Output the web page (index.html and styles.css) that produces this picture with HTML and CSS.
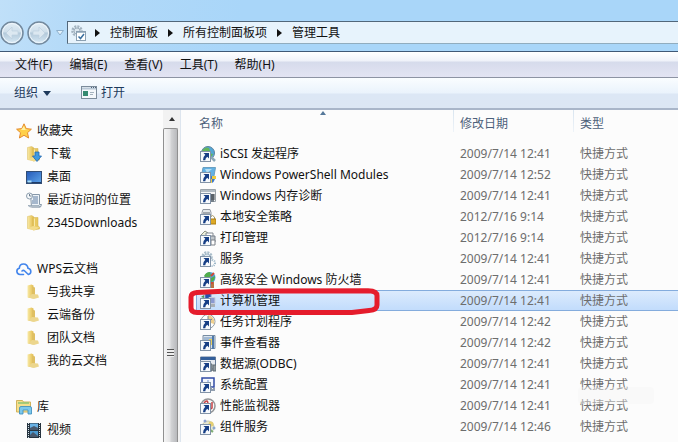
FILE: index.html
```html
<!DOCTYPE html>
<html lang="zh-CN">
<head>
    <meta charset="UTF-8">
    <meta name="viewport" content="width=device-width, initial-scale=1.0">
    <title>管理工具</title>
    <link rel="stylesheet" href="styles.css">
</head>
<body>
    <!-- 共用图标 -->
    <svg class="defs" aria-hidden="true">
        <defs>
            <linearGradient id="gold" x1="0" x2="1">
                <stop offset="0" stop-color="#f9eaa6"/>
                <stop offset="1" stop-color="#e2bc4c"/>
            </linearGradient>
            <linearGradient id="orb" x1="0" y1="0" x2="0" y2="1">
                <stop offset="0" stop-color="#e3eef6"/>
                <stop offset="0.45" stop-color="#cfdfeb"/>
                <stop offset="0.5" stop-color="#b3c9da"/>
                <stop offset="1" stop-color="#d9ebf7"/>
            </linearGradient>
            <linearGradient id="screen" x1="0" y1="0" x2="1" y2="1">
                <stop offset="0" stop-color="#2559b8"/>
                <stop offset="1" stop-color="#5ea6ea"/>
            </linearGradient>
            <symbol id="folder" viewBox="0 0 16 16">
                <path d="M1.500 1.500l4-1 2 1v13l-6-1z" fill="url(#gold)" stroke="#d9ba5c" stroke-width=".5"/>
                <path d="M7 2.500h5v8.500l1.500 1v2L7 15z" fill="#e9c95f" stroke="#cfae4c" stroke-width=".5"/>
                <path d="M8.500 3.500v8" stroke="#f8e9a8"/>
                <path d="M1.500 13.500L7 11l6.500 1.500L8 15.500z" fill="#f3dc8a"/>
            </symbol>
            <symbol id="cloud-folder" viewBox="0 0 16 16">
                <path d="M1.500 1.500l4-1 2 1v13l-6-1z" fill="url(#gold)"/>
                <path d="M6 2.500l3 1V12H6z" fill="#dfbf62"/>
                <path d="M2 13.500L6 10l6 .5 1 3-5 1.500z" fill="#ecd68d"/>
            </symbol>
            <symbol id="shortcut" viewBox="0 0 16 16">
                <rect x=".5" y="5.500" width="10" height="10" fill="#f7fafd" stroke="#8394a8"/>
                <path d="M3.500 7H9v5.500L7.300 10.800Q5.300 12 5.300 14.200H3Q2.800 11 5.300 8.800z" fill="#163e85"/>
            </symbol>
        </defs>
    </svg>

    <header class="titlebar">
        <div class="history">
            <button class="orb" type="button" aria-label="后退">
                <svg viewBox="0 0 24 24"><circle cx="12" cy="12" r="11" fill="url(#orb)" stroke="#73899d" stroke-width="1.500"/><circle cx="12" cy="12" r="9.500" fill="none" stroke="#f0f7fc"/><path d="M12 6l-6 6 6 6v-4h6v-4h-6z" fill="#dce8f1" stroke="#bdd0df" stroke-width=".7"/></svg>
            </button>
            <button class="orb" type="button" aria-label="前进">
                <svg viewBox="0 0 24 24"><circle cx="12" cy="12" r="11" fill="url(#orb)" stroke="#73899d" stroke-width="1.500"/><circle cx="12" cy="12" r="9.500" fill="none" stroke="#f0f7fc"/><path d="M12 6l6 6-6 6v-4H6v-4h6z" fill="#dce8f1" stroke="#bdd0df" stroke-width=".7"/></svg>
            </button>
            <button class="recent" type="button" aria-label="最近页面">
                <svg viewBox="0 0 8 6"><path d="M.5.5h7L4 5z" fill="#e3f2fc" stroke="#8fb0cc"/></svg>
            </button>
        </div>
        <nav class="address" aria-label="地址">
            <svg class="icon" viewBox="0 0 16 16">
                <circle cx="6" cy="6" r="4.500" fill="none" stroke="#a3b3c0" stroke-width="2.500" stroke-dasharray="2 1"/>
                <circle cx="6" cy="6" r="3" fill="#dce7ef" stroke="#9fb0be"/>
                <rect x="5.500" y="6.500" width="9" height="9" fill="#fff" stroke="#8ba0b2"/>
                <path d="M6 7.500h8" stroke="#a9bccb"/>
                <path d="M7.500 11.500l2 2 3.500-4.500" fill="none" stroke="#3a6f9f" stroke-width="1.500"/>
            </svg>
            <span class="arrow"></span>
            <a href="#">控制面板</a>
            <span class="arrow"></span>
            <a href="#">所有控制面板项</a>
            <span class="arrow"></span>
            <a href="#">管理工具</a>
        </nav>
    </header>

    <nav class="menubar" aria-label="菜单">
        <button type="button">文件(F)</button>
        <button type="button">编辑(E)</button>
        <button type="button">查看(V)</button>
        <button type="button">工具(T)</button>
        <button type="button">帮助(H)</button>
    </nav>

    <div class="toolbar">
        <button class="organize" type="button">组织<span class="caret"></span></button>
        <button class="open" type="button">
            <svg class="icon" viewBox="0 0 16 16">
                <rect x=".5" y="1.500" width="15" height="12" fill="#f4f8fb" stroke="#7c8c9b"/>
                <path d="M1 3.500h14" stroke="#b9c8d6" stroke-width="2"/>
                <path d="M10 2.500h1m1 0h1m1 0h1" stroke="#4c6279"/>
                <rect x="2" y="6" width="5" height="5" fill="#358a70"/>
                <path d="M9 7.500h4M9 9.500h3" stroke="#a4b3be"/>
            </svg>
            打开
        </button>
    </div>

    <main class="content">
        <nav class="sidebar" aria-label="导航窗格">
            <section>
                <a class="group" href="#">
                    <svg class="icon" viewBox="0 0 16 16"><path d="M8 .8l2.200 4.800 5.200.6-3.900 3.500 1.100 5.300L8 12.300 3.400 15l1.100-5.300L.6 6.200l5.200-.6z" fill="#ffd04a" stroke="#e58b2d"/><path d="M8 3l1.300 3.500L12 7H5z" fill="#fff2a5"/></svg>
                    收藏夹
                </a>
                <a href="#">
                    <svg class="icon" viewBox="0 0 16 16"><use href="#folder"/><path d="M9 6h4v4h2.500L11 15.500 6.500 10H9z" fill="#3f9ae0" stroke="#2468ae" stroke-width=".8"/></svg>
                    下载
                </a>
                <a href="#">
                    <svg class="icon" viewBox="0 0 16 16"><rect x=".5" y="2.500" width="15" height="12" fill="url(#screen)" stroke="#314d75"/><path d="M1 13.500h14" stroke="#203c68"/><path d="M1.500 12.500h4" stroke="#a8dff8" stroke-width="2"/></svg>
                    桌面
                </a>
                <a href="#">
                    <svg class="icon" viewBox="0 0 16 16"><path d="M4.500 2.500h9v10h2l-1 2.500h-9z" fill="#edf3f8" stroke="#8798a9"/><path d="M7 5h5M7 7h5M6 9h6M6 11h6" stroke="#5e7ca1"/><circle cx="3.500" cy="4" r="3" fill="#f6f9fc" stroke="#8c9dac"/><path d="M3.500 2v2h2" fill="none" stroke="#526477" stroke-width=".8"/><path d="M2 13.500h11l1 1.500H4z" fill="#bfcbd5" stroke="#8798a9" stroke-width=".6"/></svg>
                    最近访问的位置
                </a>
                <a href="#"><svg class="icon"><use href="#folder"/></svg>2345Downloads</a>
            </section>
            <section>
                <a class="group" href="#">
                    <svg class="icon" viewBox="0 0 16 16"><path d="M7.500 13.500H4A3.200 3.200 0 0 1 3.300 7.200Q3.600 3 7.500 3T12 7.200A3.200 3.200 0 0 1 12.300 13.500L8.700 10A2 2 0 0 0 6 10" fill="none" stroke="#4285ec" stroke-width="1.600" stroke-linecap="round"/></svg>
                    WPS云文档
                </a>
                <a href="#"><svg class="icon"><use href="#cloud-folder"/></svg>与我共享</a>
                <a href="#"><svg class="icon"><use href="#cloud-folder"/></svg>云端备份</a>
                <a href="#"><svg class="icon"><use href="#cloud-folder"/></svg>团队文档</a>
                <a href="#"><svg class="icon"><use href="#cloud-folder"/></svg>我的云文档</a>
            </section>
            <section>
                <a class="group" href="#">
                    <svg class="icon" viewBox="0 0 16 16"><path d="M.5 3V1.500h6l1 1.500h7V13H.5z" fill="#f5df8c" stroke="#d1b35c"/><path d="M2 4h11" stroke="#8cc474" stroke-width="1.500"/><path d="M3.500 15V9q0-1.500 1.500-1.500h9q1.500 0 1.500 1.500v6h-3.500v-4H7v4z" fill="#7cc8ec" stroke="#398bbd" stroke-width=".8"/></svg>
                    库
                </a>
                <a href="#">
                    <svg class="icon" viewBox="0 0 16 16"><rect x="1" y="1" width="14" height="15" fill="#26333f"/><path d="M2.500 1v15M13.500 1v15" stroke="#d5e3ea" stroke-dasharray="1 1"/><rect x="4" y="1.500" width="8" height="6.500" fill="#68b1e5"/><rect x="4" y="9" width="8" height="6" fill="#4b99cf"/><path d="M4 6l4-2 4 2v2H4zM4 13l3-3 5 4v1H4z" fill="#48586d"/></svg>
                    视频
                </a>
            </section>
        </nav>
        <div class="scrollbar" aria-hidden="true">
            <span class="scroll-up"></span>
            <div class="thumb"><span class="grip"></span></div>
        </div>

        <div class="files">
            <table>
                <thead>
                    <tr>
                        <th class="name">名称</th>
                        <th class="date">修改日期</th>
                        <th class="type">类型</th>
                    </tr>
                </thead>
                <tbody id="file-list"></tbody>
            </table>
            <span class="sort-mark"></span>
            <svg class="marker" viewBox="0 0 192 28" aria-hidden="true">
                <path d="M9 4.500L40 3l140-.2q9 .2 9 5V17q0 5-8 5.500l-17 2H9q-6 0-6-5V9q0-4 6-4.500z"/>
            </svg>
            <span class="watermark" aria-hidden="true"></span>
        </div>
    </main>

    <script src="script.js"></script>
</body>
</html>
```
FILE: styles.css
```css
* {
    box-sizing: border-box;
}
body {
    display: flex;
    flex-direction: column;
    height: 100vh;
    margin: 0;
    overflow: hidden;
    background: #fcfcfc;
    color: #111;
    font-family: "Noto Sans", "Noto Sans CJK SC", sans-serif;
    font-size: 12px;
    line-height: 20px;
}
a {
    color: inherit;
    text-decoration: none;
}
button {
    padding: 0;
    border: 0;
    background: none;
    color: inherit;
    font: inherit;
}
.defs {
    position: absolute;
    width: 0;
    height: 0;
}
.icon {
    flex: none;
    width: 16px;
    height: 16px;
}

/* 标题栏和地址栏 */
.titlebar {
    display: flex;
    flex: none;
    height: 51px;
    padding-top: 21px;
    background: linear-gradient(100deg, #c0e0f9 0, #b2d9f8 90px, #a9d6f9 240px, #a9d6f9 100%);
}
.history {
    display: flex;
    flex: none;
    align-items: center;
    width: 67px;
    height: 24px;
    gap: 3px;
}
.orb,
.orb svg {
    display: block;
    width: 24px;
    height: 24px;
}
.recent {
    display: flex;
    margin-left: 2px;
}
.recent svg {
    width: 8px;
    height: 6px;
}
.address {
    display: flex;
    flex: 1;
    align-items: center;
    height: 23px;
    padding-left: 3px;
    border: 1px solid #52677a;
    border-right: 0;
    border-bottom-color: #91adbf;
    background: #e7f3fc;
}
.arrow {
    margin: 0 10px;
    border: 4px solid transparent;
    border-right: 0;
    border-left: 5px solid #111;
}
.icon + .arrow {
    margin-left: 8px;
}

/* 菜单栏和工具栏 */
.menubar {
    display: flex;
    flex: none;
    align-items: center;
    height: 27px;
    padding-left: 15px;
    gap: 17px;
    border-top: 1px solid #405976;
    border-bottom: 1px solid #8d93a3;
    background: linear-gradient(#fff 0, #eff2f9 9px, #d6dbeb 10px, #e3e4f3 100%);
}
.toolbar {
    display: flex;
    flex: none;
    align-items: center;
    height: 32px;
    padding-left: 14px;
    gap: 30px;
    border-bottom: 2px solid #a9b6c9;
    background: linear-gradient(#fafdff 0, #eaf3fc 15px, #dce7f5 16px, #dce7f4 100%);
    color: #1e395b;
}
.toolbar button {
    display: flex;
    align-items: center;
    gap: 4px;
}
.caret {
    margin-left: 1px;
    border: 4px solid transparent;
    border-top: 5px solid #1e395b;
    border-bottom: 0;
}

.content {
    display: flex;
    flex: 1;
    min-height: 0;
}

/* 导航窗格 */
.sidebar {
    flex: none;
    width: 163px;
    padding-top: 9px;
    overflow: hidden;
}
.sidebar section {
    margin-bottom: 23px;
}
.sidebar a {
    display: flex;
    align-items: center;
    height: 23px;
    padding-left: 26px;
    gap: 5px;
    white-space: nowrap;
}
.sidebar .group {
    padding-left: 16px;
}
.scrollbar {
    display: flex;
    flex: none;
    flex-direction: column;
    width: 18px;
    border-right: 1px solid #dde5ee;
    background: #f2f2f2;
}
.scroll-up {
    align-self: center;
    margin: 7px 0;
    border: 3px solid transparent;
    border-top: 0;
    border-bottom: 4px solid #333;
}
.thumb {
    display: flex;
    flex: 1;
    align-items: center;
    width: 15px;
    padding: 134px 0 0 3px;
    border: 1px solid #909090;
    border-bottom: 0;
    border-radius: 2px 2px 0 0;
    background: linear-gradient(90deg, #f5f5f5, #e5e5e6 45%, #d2d3d5 55%, #b8b9bc);
}
.grip {
    width: 7px;
    height: 8px;
    background: repeating-linear-gradient(#555 0, #555 1px, #eee 1px, #eee 3px);
}

/* 文件列表 */
.files {
    position: relative;
    flex: 1;
    min-width: 0;
    padding-left: 15px;
    overflow: hidden;
}
table {
    width: 100%;
    border-spacing: 0;
    table-layout: fixed;
}
th,
td {
    padding: 0;
    text-align: left;
    font-weight: normal;
    white-space: nowrap;
}
th {
    height: 33px;
    padding: 0 0 6px 7px;
    color: #4c607a;
    background: linear-gradient(#d9e5f0, #eef3f8) no-repeat left top / 1px 22px;
}
th.name {
    padding-left: 3px;
    background: none;
}
.date {
    width: 120px;
}
.type {
    width: 105px;
}
td {
    height: 21px;
    padding-left: 7px;
    border: 1px solid transparent;
    border-width: 1px 0;
    line-height: 19px;
    color: #6d6d6d;
}
td:first-child {
    padding-left: 4px;
    color: #111;
}
.file {
    display: flex;
    align-items: center;
    gap: 4px;
}
.selected td {
    border-color: #84acdd;
    background: linear-gradient(#dcebfd, #c2dcfc);
}
.selected td:first-child {
    border-left: 1px solid #84acdd;
    padding-left: 3px;
}
.sort-mark {
    position: absolute;
    top: 1px;
    left: 139px;
    border: 3px solid transparent;
    border-top: 0;
    border-bottom: 4px solid #55789a;
}

/* 红色标注框 */
.marker {
    position: absolute;
    top: 178px;
    left: 7px;
    width: 192px;
    height: 28px;
    fill: none;
    stroke: #e51c2c;
    stroke-width: 5px;
}
/* 右下角的淡色水印 */
.watermark {
    position: absolute;
    top: 277px;
    left: 397px;
    width: 76px;
    height: 17px;
    border-radius: 4px;
    background: rgba(245, 245, 245, 0.4);
}
```
FILE: script.js
```js
// 每个文件：图标、名称、修改日期
const files = [
    { name: "iSCSI 发起程序", date: "2009/7/14 12:41", icon: '<circle cx="8" cy="7" r="6.500" fill="#53a6d5" stroke="#5e829b"/><path d="M2 5q3-5 7-3l1 3-4 2zM9 7l4 1-2 4z" fill="#64b65a"/><path d="M11 11l4 4" stroke="#8ca8b8" stroke-width="2.500"/>' },
    { name: "Windows PowerShell Modules", date: "2009/7/14 12:52", icon: '<path d="M3 .5h12.500l-2 11H1z" fill="#63b1e3" stroke="#699fc1"/><path d="M5 2l7 0-5 4z" fill="#b3def4"/><path d="M9 9h3v3H9zM12 12h3q-1 3-3 4z" fill="#3c78ca"/><path d="M12 9h4v3h-4zM9 12h3v4q-3-1-3-4z" fill="#efca3c"/>' },
    { name: "Windows 内存诊断", date: "2009/7/14 12:41", icon: '<path d="M.5 1.500h15v12H.5z" fill="#f4f5f6" stroke="#9aa3aa"/><path d="M1 3h14" stroke="#b2bcc4" stroke-width="2"/><path d="M11 6h3v8h-3z" fill="#747f88"/><path d="M10 7h5m-5 2h5m-5 2h5" stroke="#3e464d"/>' },
    { name: "本地安全策略", date: "2012/7/16 9:14", icon: '<path d="M3 .5h7l1 3v4H2v-4z" fill="#e4e7e9" stroke="#9097a0"/><path d="M3 4h7" stroke="#606971"/><path d="M10.500 10V8q2-3 4 0v2" fill="none" stroke="#a79968"/><path d="M9 10h7v5H9z" fill="#dda925" stroke="#aa7c14"/>' },
    { name: "打印管理", date: "2012/7/16 9:14", icon: '<path d="M1 5L5 1l3 2-3 3z" fill="#edf0db" stroke="#8d9385"/><path d="M6 3h7v4H6z" fill="#fff" stroke="#838a92"/><path d="M5 6h10v6H5z" fill="#bfc5ca" stroke="#777f88"/><path d="M11 10h4v5h-4z" fill="#fff" stroke="#7a8087"/>' },
    { name: "服务", date: "2009/7/14 12:41", icon: '<circle cx="7" cy="6" r="4.500" fill="none" stroke="#a9bdca" stroke-width="2.500" stroke-dasharray="2 1"/><circle cx="7" cy="6" r="3" fill="#e0eaf0" stroke="#a4b9c7"/><circle cx="12" cy="12" r="3" fill="none" stroke="#9ab5c7" stroke-width="2" stroke-dasharray="1 1"/>' },
    { name: "高级安全 Windows 防火墙", date: "2009/7/14 12:41", icon: '<path d="M11 9h3v7h-3z" fill="#b87244"/><circle cx="10" cy="5.500" r="5.500" fill="#53a4d9"/><path d="M4 4q2-4 6-4l1 4-4 3zM11 6l4-2q0 5-4 6z" fill="#52ad4c"/><path d="M8 11h5M11 4l3-3" stroke="#ce4938" stroke-width="2"/>' },
    { name: "计算机管理", date: "2009/7/14 12:41", icon: '<path d="M5 .5h6v6H5z" fill="#2351af" stroke="#8094bb"/><path d="M9 4.500h6v6H9z" fill="#8a99d1" stroke="#c7ccdc"/><path d="M11 11h4v3h-4z" fill="#a9afb5"/><path d="M1 4l3-2v3z" fill="#4c9353"/>', selected: true },
    { name: "任务计划程序", date: "2009/7/14 12:42", icon: '<circle cx="8" cy="7.500" r="7" fill="#fff" stroke="#929ba3"/><path d="M8 8V1a7 7 0 0 1 6 9z" fill="#efd08f"/><path d="M8 2v6l4-3" fill="none" stroke="#78868e"/>' },
    { name: "事件查看器", date: "2009/7/14 12:42", icon: '<path d="M3 .5h12v13H3z" fill="#dbe4ed" stroke="#788da3"/><path d="M4 3h8M4 5h6" stroke="#698fb9"/><path d="M9 4h4v6H9z" fill="#e8cf5b"/><path d="M13 1v13" stroke="#4f79aa" stroke-width="2"/>' },
    { name: "数据源(ODBC)", date: "2009/7/14 12:41", icon: '<path d="M.5 1h15v12H.5z" fill="#e5e9ef" stroke="#647a98"/><path d="M1 2.500h14" stroke="#345f9a" stroke-width="3"/><path d="M9 8h3v7H9zM13 9h3v6h-3z" fill="#929ba1" stroke="#606c75"/>' },
    { name: "系统配置", date: "2009/7/14 12:41", icon: '<path d="M2 1h12v9H2z" fill="#f5f8ff" stroke="#304ba5" stroke-width="1.500"/><path d="M8 3v5M6 6h5" stroke="#7597d4"/><path d="M11 10v3h3v-2" fill="none" stroke="#929eaf" stroke-width="2"/>' },
    { name: "性能监视器", date: "2009/7/14 12:41", icon: '<circle cx="8" cy="8" r="7" fill="#fafafa" stroke="#939598" stroke-width="1.500"/><path d="M4 5q4-5 4 2t4 3V4" fill="none" stroke="#c54044" stroke-width="1.500"/>' },
    { name: "组件服务", date: "2009/7/14 12:46", icon: '<circle cx="8" cy="8" r="6" fill="#e8e8d2" stroke="#c6c8a9"/><circle cx="5" cy="2" r="1.500" fill="#8ca2d1"/><circle cx="11" cy="5" r="2.500" fill="#e5cf72"/><circle cx="14" cy="9" r="1.500" fill="#89a7cf"/><path d="M9 10l4 3" stroke="#7cad75" stroke-width="2"/>' }
];

const list = document.getElementById("file-list");

files.forEach(file => {
    const row = document.createElement("tr");
    if (file.selected) {
        row.classList.add("selected");
    }
    row.innerHTML = `
        <td><div class="file"><svg class="icon" viewBox="0 0 16 16">${file.icon}<use href="#shortcut"/></svg>${file.name}</div></td>
        <td>${file.date}</td>
        <td>快捷方式</td>
    `;
    list.appendChild(row);
});
```
